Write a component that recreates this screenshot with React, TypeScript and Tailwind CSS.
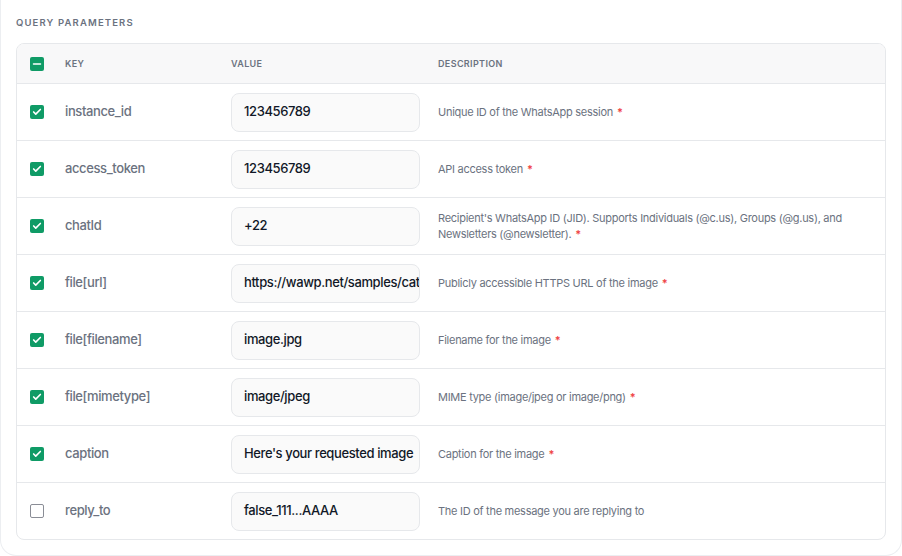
import { Check, Minus } from 'lucide-react';

type Param = {
  key: string;
  value: string;
  description: string;
  required: boolean;
  enabled: boolean;
};

const params: Param[] = [
  { key: 'instance_id', value: '123456789', description: 'Unique ID of the WhatsApp session', required: true, enabled: true },
  { key: 'access_token', value: '123456789', description: 'API access token', required: true, enabled: true },
  {
    key: 'chatId',
    value: '+22',
    description: "Recipient's WhatsApp ID (JID). Supports Individuals (@c.us), Groups (@g.us), and Newsletters (@newsletter).",
    required: true,
    enabled: true,
  },
  { key: 'file[url]', value: 'https://wawp.net/samples/cat.jpg', description: 'Publicly accessible HTTPS URL of the image', required: true, enabled: true },
  { key: 'file[filename]', value: 'image.jpg', description: 'Filename for the image', required: true, enabled: true },
  { key: 'file[mimetype]', value: 'image/jpeg', description: 'MIME type (image/jpeg or image/png)', required: true, enabled: true },
  { key: 'caption', value: "Here's your requested image", description: 'Caption for the image', required: true, enabled: true },
  { key: 'reply_to', value: 'false_111...AAAA', description: 'The ID of the message you are replying to', required: false, enabled: false },
];

const font = { fontFamily: 'Inter, "Noto Sans", sans-serif' };

const Box = ({ checked, partial }: { checked: boolean; partial?: boolean }) =>
  checked ? (
    <span className="flex h-[14px] w-[14px] items-center justify-center rounded-[2px] bg-[#0f9b66]">
      {partial ? (
        <Minus className="h-[12px] w-[12px] text-white" strokeWidth={3} />
      ) : (
        <Check className="h-[10px] w-[10px] text-white" strokeWidth={4} />
      )}
    </span>
  ) : (
    <span className="block h-[14px] w-[14px] rounded-[2px] border border-[#8a8d96] bg-white" />
  );

const App = () => {
  return (
    <div className="bg-white" style={font}>
      <div className="h-[556px] rounded-b-2xl border-x border-b border-[#eceef1] px-[15px] pt-[17px]">
        <div className="mb-[14px] text-[9.5px] font-semibold uppercase leading-[12px] tracking-[0.12em] text-[#6b7280]">
          Query Parameters
        </div>
        <div className="overflow-hidden rounded-lg border border-[#e6e8eb]">
          <div className="grid h-[40px] grid-cols-[48px_166px_207px_1fr] items-center border-b border-[#e6e8eb] bg-[#f8f8f9] text-[9px] font-semibold uppercase tracking-[0.04em] text-[#6b7280]">
            <div className="pl-[13px]">
              <Box checked partial />
            </div>
            <div>Key</div>
            <div>Value</div>
            <div>Description</div>
          </div>
          {params.map((p, i) => (
            <div
              key={p.key}
              className={`grid grid-cols-[48px_166px_207px_1fr] items-center ${i < params.length - 1 ? 'h-[57px] border-b border-[#e6e8eb]' : 'h-[56px]'}`}
            >
              <div className="pl-[13px]">
                <Box checked={p.enabled} />
              </div>
              <div className="text-[13px] font-medium tracking-[-0.03em] text-[#6b7280]">{p.key}</div>
              <div>
                <div className="flex h-[39px] w-[189px] items-center overflow-hidden whitespace-nowrap rounded-lg border border-[#e6e8eb] bg-[#fafafa] pl-[12px] text-[13px] font-medium tracking-[-0.03em] text-[#111827]">
                  {p.value}
                </div>
              </div>
              <div className="pr-6 text-[11px] leading-[16px] tracking-[-0.025em] text-[#6b7280]">
                {p.description}
                <span>{p.required && <span className="ml-[4px] font-semibold text-[#ef4444]">*</span>}</span>
              </div>
            </div>
          ))}
        </div>
      </div>
    </div>
  );
};

export default App;
